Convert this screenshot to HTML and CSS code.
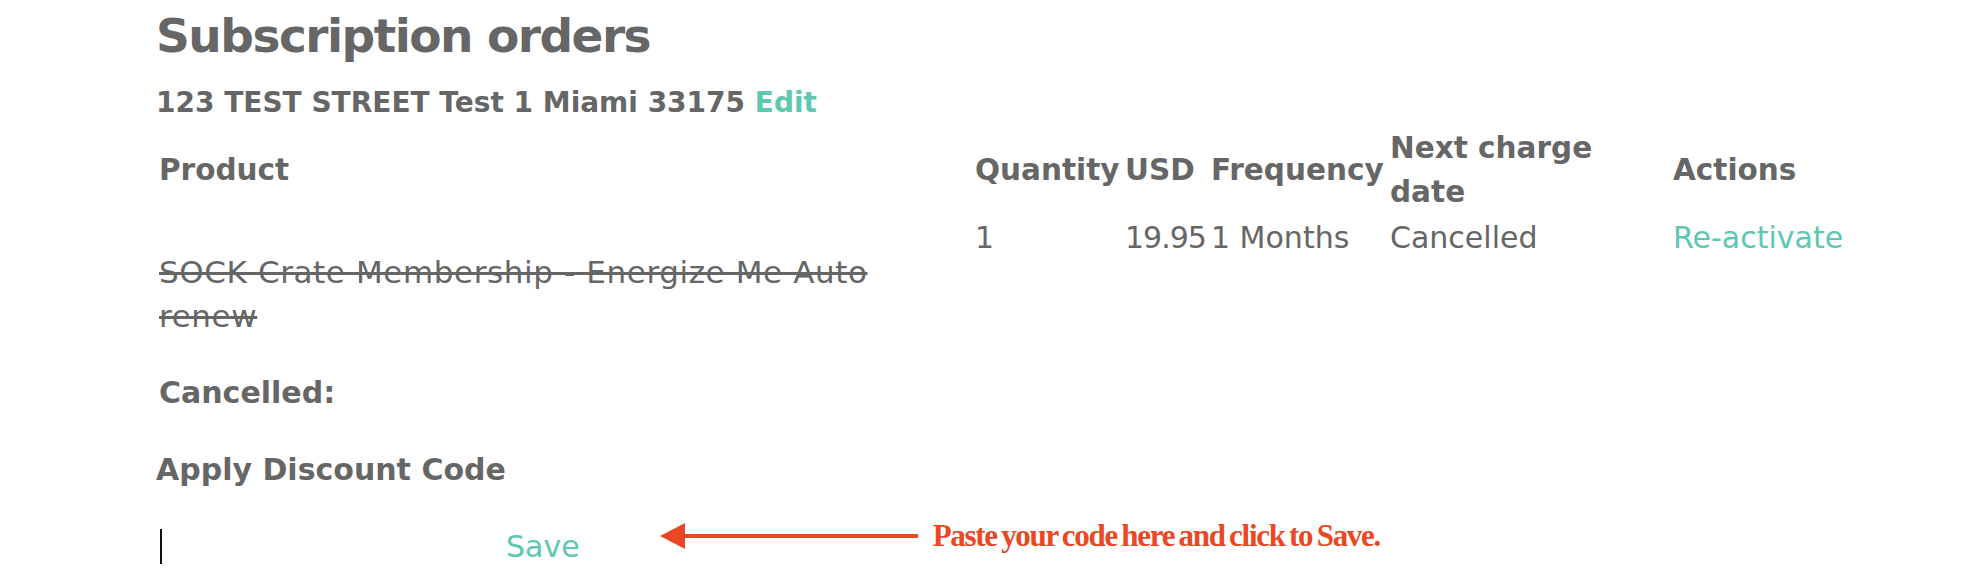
FILE: index.html
```html
<!DOCTYPE html>
<html lang="en">
<head>
  <meta charset="UTF-8">
  <title>Subscription orders</title>
  <link rel="stylesheet" href="styles.css">
</head>
<body>
  <div class="container">
    <h1>Subscription orders</h1>
    <h2>123 TEST STREET Test 1 Miami 33175 <a href="#" class="link">Edit</a></h2>

    <table class="orders">
      <colgroup>
        <col class="col-product">
        <col class="col-qty">
        <col class="col-usd">
        <col class="col-freq">
        <col class="col-next">
        <col class="col-actions">
      </colgroup>
      <thead>
        <tr>
          <th>Product</th>
          <th>Quantity</th>
          <th>USD</th>
          <th>Frequency</th>
          <th>Next charge<br>date</th>
          <th>Actions</th>
        </tr>
      </thead>
      <tbody>
        <tr>
          <td>
            <div class="product-name">SOCK Crate Membership - Energize Me Auto renew</div>
            <div class="status">Cancelled:</div>
          </td>
          <td>1</td>
          <td class="price">19.95</td>
          <td>1 Months</td>
          <td>Cancelled</td>
          <td><a href="#" class="link">Re-activate</a></td>
        </tr>
      </tbody>
    </table>

    <h3>Apply Discount Code</h3>
    <div class="discount">
      <div class="code-input"><span class="caret"></span></div>
      <button class="save">Save</button>
      <div class="hint">
        <svg class="arrow" width="258" height="26" viewBox="0 0 258 26">
          <polygon points="0,13 25,0 25,26" fill="#ea4825"/>
          <rect x="22" y="11" width="236" height="4" fill="#ea4825"/>
        </svg>
        <span class="hint-text">Paste your code here and click to Save.</span>
      </div>
    </div>
  </div>
</body>
</html>
```

FILE: styles.css
```css
body {
  margin: 0;
  background-color: #fff;
  color: #666;
  font-family: "DejaVu Sans", Lato, sans-serif;
}
.container {
  padding: 6px 0 0 156px;
}
h1 {
  margin: 0;
  font-size: 47px;
  line-height: 60px;
  font-weight: 700;
  letter-spacing: -1.5px;
}
h2 {
  margin: 17px 0 0;
  font-size: 28px;
  line-height: 40px;
  font-weight: 700;
}
.link {
  color: #5ec8b0;
  text-decoration: none;
}
.orders {
  margin-top: 3px;
  border-collapse: collapse;
  table-layout: fixed;
  width: 1720px;
  font-size: 30px;
  line-height: 44px;
}
.col-product { width: 816px; }
.col-qty { width: 150px; }
.col-usd { width: 86px; }
.col-freq { width: 179px; }
.col-next { width: 283px; }
.orders th {
  padding: 0 3px;
  text-align: left;
  vertical-align: middle;
  font-size: 29.5px;
  font-weight: 700;
  white-space: nowrap;
}
.orders td {
  padding: 2px 3px 0;
  vertical-align: top;
  white-space: nowrap;
}
.orders td.price {
  letter-spacing: -1px;
}
.product-name {
  margin-top: 34px;
  max-width: 740px;
  font-size: 31px;
  letter-spacing: 0.6px;
  white-space: normal;
  text-decoration: line-through;
}
.status {
  margin-top: 33px;
  font-weight: 700;
}
h3 {
  margin: 33px 0 0;
  font-size: 30px;
  line-height: 44px;
  font-weight: 700;
}
.discount {
  display: flex;
  align-items: center;
  margin-top: 26px;
}
.code-input {
  width: 350px;
  height: 44px;
  display: flex;
  align-items: center;
}
.caret {
  display: block;
  width: 2px;
  height: 35px;
  margin-left: 4px;
  background-color: #111;
}
.save {
  border: none;
  background: none;
  padding: 0;
  color: #5ec8b0;
  font-family: "DejaVu Sans", Lato, sans-serif;
  font-size: 30px;
  line-height: 44px;
  cursor: pointer;
}
.hint {
  display: flex;
  align-items: center;
  margin-left: 80px;
  margin-bottom: 21px;
}
.arrow {
  display: block;
}
.hint-text {
  margin-left: 15px;
  color: #ea4825;
  font-family: "Liberation Serif", serif;
  font-weight: 700;
  font-size: 31px;
  letter-spacing: -1.3px;
  word-spacing: -2px;
}
```
